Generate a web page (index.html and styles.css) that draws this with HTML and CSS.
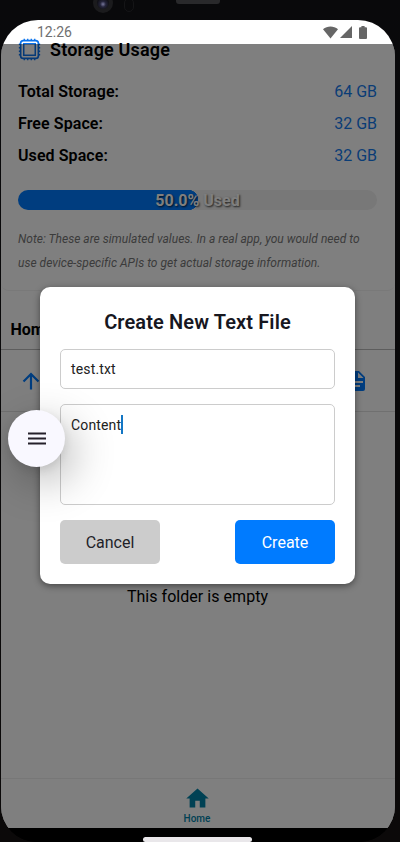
FILE: index.html
```html
<!DOCTYPE html>
<html lang="en">
<head>
<meta charset="utf-8">
<title>Create New Text File</title>
<link rel="stylesheet" href="styles.css">
</head>
<body>
<div class="phone">
  <span class="camera"></span>
  <span class="sensor"></span>
  <span class="speaker"></span>
  <div class="screen">
    <main class="content">
      <section class="card">
        <h2 class="card-title">
          <svg class="chip" viewBox="0 0 22 22" fill="none" stroke="#0a73ee"><rect x="2.500" y="2.500" width="17" height="17" rx="2.600" stroke-width="1.600"/><rect x="5.500" y="5.500" width="11" height="11" stroke-width="1.400"/><path stroke-width="1.300" d="M6 .8v2M9.300 .8v2M12.700 .8v2M16 .8v2M6 19.200v2M9.300 19.200v2M12.700 19.200v2M16 19.200v2M.8 6h2M.8 9.300h2M.8 12.700h2M.8 16h2M19.200 6h2M19.200 9.300h2M19.200 12.700h2M19.200 16h2"/></svg>
          <span>Storage Usage</span>
        </h2>
        <div class="row"><b>Total Storage:</b><span>64 GB</span></div>
        <div class="row"><b>Free Space:</b><span>32 GB</span></div>
        <div class="row"><b>Used Space:</b><span>32 GB</span></div>
        <div class="progress"><span class="progress-label">50.0% Used</span></div>
        <p class="note">Note: These are simulated values. In a real app, you would need to<br>use device-specific APIs to get actual storage information.</p>
      </section>
      <h3 class="crumb">Home</h3>
      <div class="toolbar">
        <svg class="tool" viewBox="0 0 24 24"><path fill="none" stroke="#007bff" stroke-width="2.200" d="M12 20.500V5M4.500 12.500 12 5l7.500 7.500"/></svg>
        <svg class="tool" viewBox="0 0 24 24"><path fill="#007bff" d="M13 9h5.500L13 3.500V9M6 2h8l6 6v12a2 2 0 0 1-2 2H6a2 2 0 0 1-2-2V4c0-1.110.89-2 2-2m9 16v-2H6v2h9m3-4v-2H6v2h12z"/></svg>
      </div>
      <p class="empty">This folder is empty</p>
    </main>
    <nav class="tabs">
      <svg class="home" viewBox="0 0 24 24"><path fill="#0082a8" d="M10 20v-6h4v6h5v-8h3L12 3 2 12h3v8z"/></svg>
      <span>Home</span>
    </nav>
    <div class="gesture"><span class="pill"></span></div>
    <div class="backdrop"></div>
    <header class="status">
      <span>12:26</span>
      <span class="signals">
        <svg width="15" height="13" viewBox="0 0 15 13"><path fill="#666" d="M7.500 12.500 0 3.300C4.300-.4 10.700-.4 15 3.300z"/></svg>
        <svg width="12" height="12" viewBox="0 0 12 12"><path fill="#666" d="M0 12 12 0v12z"/></svg>
        <svg class="battery" width="8" height="13" viewBox="0 0 8 13"><path fill="#666" d="M2.400 0h3.200v1.300H7q1 0 1 1V12q0 1-1 1H1q-1 0-1-1V2.300q0-1 1-1h1.400z"/></svg>
      </span>
    </header>
    <div class="modal">
      <h1>Create New Text File</h1>
      <div class="field name">test.txt</div>
      <div class="field body">Content<i class="caret"></i></div>
      <div class="actions"><button class="cancel">Cancel</button><button class="create">Create</button></div>
    </div>
    <div class="fab"><svg width="18" height="13" viewBox="0 0 18 13"><path stroke="#25202b" stroke-width="2" d="M0 1.500h18M0 6.500h18M0 11.500h18"/></svg></div>
  </div>
</div>
</body>
</html>
```

FILE: styles.css
```css
* { box-sizing: border-box; }
body, h1, h2, h3, p { margin: 0; }
body {
  width: 400px;
  height: 842px;
  overflow: hidden;
  background: #0b0909;
  font-family: Roboto, "Liberation Sans", sans-serif;
  color: #000;
}
.phone {
  position: relative;
  height: 842px;
  padding: 20px 5px 0 1px;
  background: linear-gradient(#09090b, #0b0909);
}
.camera, .sensor, .speaker { position: absolute; }
.camera {
  left: 93px;
  top: -7px;
  width: 20px;
  height: 20px;
  border-radius: 50%;
  border: 4px solid #1b1b1d;
  background: radial-gradient(circle at 50% 60%, #77779c 0, #24243a 30%, #101016 65%);
}
.sensor { left: 124px; top: -2px; width: 10px; height: 14px; border: 1px solid #151517; border-radius: 5px; }
.speaker { left: 176px; top: 0; width: 44px; height: 4px; border-radius: 0 0 3px 3px; background: #29292b; }
.screen {
  position: relative;
  display: flex;
  flex-direction: column;
  height: 822px;
  overflow: hidden;
  border-radius: 37px 37px 36px 36px;
  background: linear-gradient(#fff 780px, #000 780px);
}
.content { flex: 1; min-height: 0; }
.card {
  height: 271px;
  padding: 19px 18px 0 17px;
  border-bottom: 1px solid #f2f2f2;
  border-radius: 0 0 8px 8px;
}
.card-title {
  display: flex;
  align-items: center;
  gap: 9px;
  height: 21px;
  margin-bottom: 16px;
  font-size: 18px;
  font-weight: 600;
  letter-spacing: .16px;
}
.chip { width: 23px; height: 23px; }
.row { display: flex; justify-content: space-between; height: 32px; line-height: 32px; font-size: 16px; }
.row b { font-weight: 600; letter-spacing: .08px; }
.row span { color: #147aec; }
.progress {
  height: 20px;
  margin-top: 18px;
  border-radius: 10px;
  background: radial-gradient(circle at 170px 10px, #007bff 10px, transparent 10.500px), linear-gradient(90deg, #007bff 170px, #f0f0f0 170px);
  text-align: center;
}
.progress-label { color: #fff; font-size: 16px; font-weight: 700; line-height: 21px; text-shadow: 1px 1px 2px #000000bf; }
.note { margin-top: 17px; color: #777; font-size: 12px; font-style: italic; line-height: 24px; letter-spacing: .015px; white-space: nowrap; }
.crumb { height: 59px; padding: 29px 9.500px 0; border-bottom: 1px solid #bbb; font-size: 16px; font-weight: 700; line-height: 20px; }
.toolbar {
  display: flex;
  align-items: center;
  justify-content: space-between;
  height: 62px;
  padding: 0 26px 0 18px;
  border-bottom: 1px solid #e0e0e0;
}
.tool { width: 24px; height: 24px; }
.empty { margin-top: 175px; padding-right: 1px; text-align: center; font-size: 16px; line-height: 20px; letter-spacing: .04px; }
.tabs {
  display: flex;
  flex-direction: column;
  align-items: center;
  height: 50px;
  padding: 6px 2px 0 0;
  border-top: 1px solid #eee;
  background: #fff;
  color: #0082a8;
  font-size: 10px;
  font-weight: 500;
  line-height: 12px;
}
.home { width: 27px; height: 27px; margin-bottom: 1px; }
.gesture { display: flex; justify-content: center; height: 14px; padding: 9px 1px 0 0; background: #000; }
.pill { z-index: 1; width: 109px; height: 5px; border-radius: 3px; background: #e9e7ea; }
.backdrop { position: absolute; inset: 24px 0 14px; background: rgba(0, 0, 0, .5); }
.status {
  position: absolute;
  inset: 0 0 auto;
  display: flex;
  justify-content: space-between;
  height: 24px;
  padding: 0 28px 0 36px;
  color: #707070;
  font-size: 14px;
  line-height: 25px;
}
.signals { display: flex; align-items: center; gap: 2px; }
.battery { margin-left: 5px; }
.modal {
  position: absolute;
  left: 39px;
  top: 267px;
  width: 315px;
  height: 297px;
  padding: 20px;
  border-radius: 10px;
  background: #fff;
  box-shadow: 0 2px 7px rgba(0, 0, 0, .45);
}
.modal h1 { height: 42px; color: #17171f; text-align: center; font-size: 20px; font-weight: 600; line-height: 30px; letter-spacing: .12px; }
.field { border: 1px solid #ccc; border-radius: 5px; padding: 10px; color: #222; font-size: 14px; line-height: 20px; letter-spacing: .15px; }
.name { height: 40px; line-height: 18px; margin-bottom: 15px; }
.body { height: 101px; margin-bottom: 15px; }
.caret { display: inline-block; width: 2px; height: 19px; vertical-align: -4px; background: #1376c4; }
.actions { display: flex; justify-content: space-between; }
.actions button { width: 100px; height: 44px; padding: 1px 0 0; border: 0; border-radius: 5px; font: 16px Roboto, "Liberation Sans", sans-serif; }
.actions .cancel { background: #ccc; color: #1f1f29; }
.actions .create { background: #007bff; color: #fff; }
.fab {
  position: absolute;
  left: 7px;
  top: 390px;
  display: flex;
  align-items: center;
  justify-content: center;
  width: 57px;
  height: 57px;
  border-radius: 50%;
  background: #f9f8ff;
  box-shadow: 8px 14px 44px rgba(0, 0, 0, .3), 0 3px 10px rgba(0, 0, 0, .1);
}
```
